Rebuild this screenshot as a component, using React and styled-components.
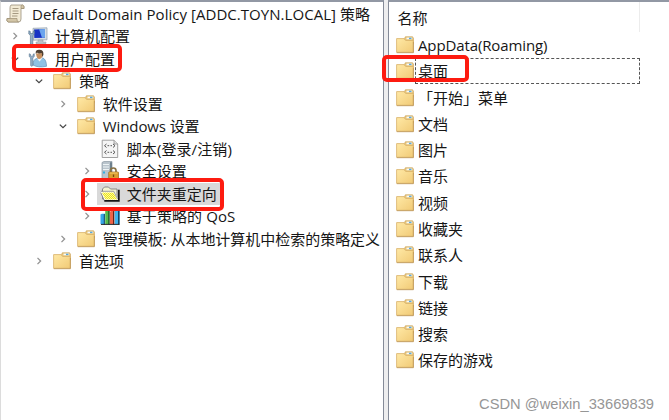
import React from "react";
import styled, { createGlobalStyle } from "styled-components";

const GlobalStyle = createGlobalStyle`
    * { box-sizing: border-box; }
    body {
        margin: 0;
        background: #fff;
        overflow: hidden;
    }
`;

const Console = styled.div`
    position: relative;
    display: flex;
    width: 669px;
    height: 420px;
    overflow: hidden;
    background: #eeeeef;
    color: #161616;
    font: 15px/22px "Open Sans", "Noto Sans CJK SC", sans-serif;
    white-space: nowrap;
`;

const TreePane = styled.div`
    width: 384px;
    padding-top: .7px;
    background: #fff;
    border-top: 2px solid #9298a4;
    border-left: 1px solid #dcdcdc;
    border-right: 1px solid #858b98;
    overflow: hidden;
`;

const ListPane = styled.div`
    flex: 1;
    margin-left: 4px;
    background: #fff;
    border-top: 2px solid #9298a4;
    border-left: 1px solid #858b98;
`;

const TreeRow = styled.div`
    display: flex;
    align-items: center;
    height: 22.48px;
    padding-left: ${props => props.$depth ? 5 + (props.$depth - 1) * 23.9 : 4}px;
`;

const Toggle = styled.span`
    display: flex;
    justify-content: center;
    width: 18px;
    margin-right: 4px;
    flex: none;
`;

const IconSlot = styled.span`
    display: flex;
    justify-content: center;
    width: 20px;
    flex: none;
`;

const ItemBody = styled.div`
    display: flex;
    align-items: center;
    height: 22px;
    padding: 0 5px 0 3px;
    margin-left: -3px;
    background: ${props => props.$selected ? "#d9d9d9" : "transparent"};
`;

const Label = styled.span`
    margin-left: 7px;
    letter-spacing: ${props => props.$spacing || 0}px;
`;

const Header = styled.div`
    width: 251px;
    height: 30px;
    padding: 5px 0 0 8.5px;
    border-right: 1px solid #ececec;
`;

const ListRow = styled.div`
    display: flex;
    align-items: center;
    height: 26.27px;
    padding-left: 6px;
`;

const ListLabel = styled.span`
    display: flex;
    align-items: center;
    width: ${props => props.$focused ? "225px" : "auto"};
    height: 26px;
    padding-left: 2px;
    border: 1px dashed ${props => props.$focused ? "#555" : "transparent"};
    letter-spacing: ${props => props.$spacing || 0}px;
`;

const Marker = styled.div`
    position: absolute;
    z-index: 2;
    left: ${props => props.$x}px;
    top: ${props => props.$y}px;
    width: ${props => props.$w}px;
    height: ${props => props.$h}px;
    border: 4px solid #fd1b10;
    border-radius: 5px;
`;

const Watermark = styled.div`
    position: absolute;
    right: 15px;
    bottom: 5px;
    color: #969696;
    font: 14.7px/22px "Liberation Sans", sans-serif;
`;

const FolderIcon = () => (
    <svg width="18" height="18" viewBox="0 0 18 18">
        <defs>
            <linearGradient id="folder" x1="0" y1="0" x2="1" y2="1">
                <stop offset="0" stopColor="#ffe9a6" />
                <stop offset="1" stopColor="#f1ca76" />
            </linearGradient>
        </defs>
        <path d="M8 4L9.3 .8H16.6L17.4 2.2V8H8Z" fill="#e9c77b" stroke="#cba45c" strokeWidth=".7" />
        <rect x="10.5" y="1.6" width="5.7" height="1.7" fill="#f8fafa" />
        <rect x="13" y="1.7" width="2.5" height="1.4" fill="#5ba9dc" />
        <path d="M.6 2.6H8L9.6 4.4H17.3V16.3H.6Z" fill="url(#folder)" stroke="#d8b067" strokeWidth=".8" />
        <path d="M.8 16.7H17.4V6" fill="none" stroke="#bd9557" strokeWidth=".8" />
    </svg>
);

const ScrollIcon = () => (
    <svg width="19" height="19" viewBox="0 0 19 19">
        <path d="M5 1H16.5Q18.3 1.2 18 4.5H15V15Q15 18 12.5 18H2Q.4 17.5 1 14.5H4V4Q4 2 5 1Z" fill="#f2ead4" stroke="#9b917c" strokeWidth=".8" />
        <path d="M15 4.5V2.5Q15.2 1 16.5 1Q18.6 1.4 18 4.5ZM1 14.5H11Q10.5 17.8 12.7 18H2Q.4 17.5 1 14.5Z" fill="#d3c6a8" stroke="#9b8c70" strokeWidth=".7" />
        <path d="M6.5 4.5H12.5M6.5 7H12.5M6.5 9.5H12.5M6 12H11.5" stroke="#a69a82" strokeWidth="1" />
    </svg>
);

const Wrench = () => (
    <path d="M.8.8V4L2.4 5.5V14Q3.5 15.5 4.8 14V5.5L6.4 4V.8L5 1.5V3.5H2.3V1.5Z" fill="#92afc8" stroke="#536f89" strokeWidth=".6" />
);

const ComputerIcon = () => (
    <svg width="20" height="18" viewBox="0 0 20 18">
        <path d="M5 1.3L19 .8V12.8L5.3 13.2Z" fill="#d7dfe5" stroke="#8c9ba9" strokeWidth=".7" />
        <path d="M6 2.4L17 2V10.8L6.3 11Z" fill="#1732c4" />
        <path d="M11 2.2L17 2V10.8H14Z" fill="#6ba4ed" />
        <path d="M10 13H15V15H18V16.5H8V15H10Z" fill="#bac3c9" stroke="#8d979f" strokeWidth=".5" />
        <g transform="translate(0 3)"><Wrench /></g>
    </svg>
);

const UserIcon = () => (
    <svg width="20" height="19" viewBox="0 0 20 19">
        <path d="M5 16Q5 10 9 9.5L15 9Q18.5 11 18.5 17.3Q10 19 5 16Z" fill="#8fc2e4" stroke="#6191b7" strokeWidth=".7" />
        <path d="M9 9.5L11.5 12.5L14.5 9Z" fill="#f4f6f5" />
        <path d="M8 4.5Q8.5 10 11.5 10Q15 9 15 4Z" fill="#c78f5e" />
        <path d="M7.8 5Q7 .8 11 .8Q16 .6 15.4 6L14.2 8L13.8 4Q10.5 5 9 3.5Z" fill="#4f4032" />
        <g transform="translate(.5 4) scale(.9)"><Wrench /></g>
    </svg>
);

const ScriptIcon = () => (
    <svg width="18" height="20" viewBox="0 0 18 20">
        <path d="M1.2 1.2H13L16.7 5V18.5H1.2Z" fill="#f5f5f5" stroke="#969696" strokeWidth=".9" />
        <path d="M13 1.2V5H16.7" fill="#ddd" stroke="#969696" strokeWidth=".8" />
        <path d="M5.5 5L3.5 6.7L5.5 8.5M6.5 6.7H8.2M9.5 6.7H11M12 5L14 6.7L12 8.5M5.5 11.5L3.5 13.3L5.5 15M6.5 13.3H8.2M9.5 13.3H11M12 11.5L14 13.3L12 15" fill="none" stroke="#555" strokeWidth="1" />
    </svg>
);

const SecurityIcon = () => (
    <svg width="20" height="20" viewBox="0 0 20 20">
        <path d="M2 1.5L4 .5H12V17L10 18H2Z" fill="#b9c4cc" stroke="#8a98a2" strokeWidth=".7" />
        <path d="M3 3.5H9M3 6H9M3 8.5H9" stroke="#edf3f5" strokeWidth="1.2" />
        <path d="M11 1.2V16.5" stroke="#677a87" strokeWidth="1.8" />
        <rect x="3" y="10.5" width="2" height="2" fill="#32aee3" />
        <path d="M10.5 12V9.5Q10.5 7 13.3 7Q16 7 16 9.5V12" fill="none" stroke="#877145" strokeWidth="1.7" />
        <rect x="8.7" y="11" width="9.8" height="7.2" rx=".6" fill="#dc9e30" stroke="#98661b" strokeWidth=".7" />
        <path d="M9.5 12H17.5" stroke="#f6cf6a" />
        <path d="M13.5 13.5V16" stroke="#70480f" strokeWidth="1.3" />
    </svg>
);

const OpenFolderIcon = () => (
    <svg width="20" height="18" viewBox="0 0 20 18">
        <defs>
            <pattern id="checker" width="2" height="2" patternUnits="userSpaceOnUse">
                <rect width="2" height="2" fill="#ffff91" />
                <path d="M0 0H1V1H0ZM1 1H2V2H1Z" fill="#e8df25" />
            </pattern>
        </defs>
        <path d="M2.5 14V4L4.5 2H8.5L10.5 4H17V15Z" fill="#f4f4d2" stroke="#888" strokeWidth="1" />
        <path d="M1 7H14L18 15H5Z" fill="url(#checker)" stroke="#fff" strokeWidth="1.2" />
        <path d="M.7 7.5L4.3 15.5" fill="none" stroke="#888" strokeWidth="1" />
        <path d="M4.3 15.8H18.8V4.8" fill="none" stroke="#161616" strokeWidth="1.8" />
        <path d="M.7 6.3H13.8L17.5 14" fill="none" stroke="#888" strokeWidth=".8" />
    </svg>
);

const QosIcon = () => (
    <svg width="21" height="19" viewBox="0 0 21 19">
        <path d="M.5 7.5L2 6.5H5V17.5H.5Z" fill="#36a6e8" />
        <path d="M4 7.2L5 6.5V18H4Z" fill="#123b5e" />
        <path d="M5.5 2.5L7 1H10V17.5H5.5Z" fill="#55bc4e" />
        <path d="M8.8 2L10 1V18H8.8Z" fill="#173d20" />
        <path d="M10.5 4.5L12 3.3H15V17.5H10.5Z" fill="#ef6348" />
        <path d="M13.8 4.2L15 3.3V18H13.8Z" fill="#501912" />
        <path d="M15.5 4L17 3H20.5V17.5H15.5Z" fill="#3fb4ef" />
        <path d="M19 3.8L20.5 3V18H19Z" fill="#123c59" />
        <path d="M1 17.8H20.5" stroke="#151b20" strokeWidth="1" />
    </svg>
);

const Chevron = ({ open }) => (
    <svg width="8" height="8" viewBox="0 0 8 8">
        <path
            d={open ? "M.8 2.6L4 5.6L7.2 2.6" : "M2.5 .9L5.6 4L2.5 7.1"}
            fill="none"
            stroke={open ? "#444" : "#929292"}
            strokeWidth="1.3"
        />
    </svg>
);

const tree = [
    { depth: 0, icon: ScrollIcon, text: "Default Domain Policy [ADDC.TOYN.LOCAL] 策略", spacing: 0.04 },
    { depth: 1, icon: ComputerIcon, text: "计算机配置" },
    { depth: 1, icon: UserIcon, text: "用户配置", open: true },
    { depth: 2, icon: FolderIcon, text: "策略", open: true },
    { depth: 3, icon: FolderIcon, text: "软件设置" },
    { depth: 3, icon: FolderIcon, text: "Windows 设置", open: true, spacing: -0.1 },
    { depth: 4, icon: ScriptIcon, text: "脚本(登录/注销)", leaf: true, spacing: 0.1 },
    { depth: 4, icon: SecurityIcon, text: "安全设置" },
    { depth: 4, icon: OpenFolderIcon, text: "文件夹重定向", selected: true },
    { depth: 4, icon: QosIcon, text: "基于策略的 QoS", spacing: 0.1 },
    { depth: 3, icon: FolderIcon, text: "管理模板: 从本地计算机中检索的策略定义", spacing: -0.03 },
    { depth: 2, icon: FolderIcon, text: "首选项" },
];

const folders = [
    "AppData(Roaming)", "桌面", "「开始」菜单", "文档", "图片", "音乐", "视频",
    "收藏夹", "联系人", "下载", "链接", "搜索", "保存的游戏",
];

const TreeItem = ({ item }) => {
    const Icon = item.icon;
    return (
        <TreeRow $depth={item.depth}>
            {item.depth > 0 && <Toggle>{!item.leaf && <Chevron open={item.open} />}</Toggle>}
            <ItemBody $selected={item.selected}>
                <IconSlot><Icon /></IconSlot>
                <Label $spacing={item.spacing}>{item.text}</Label>
            </ItemBody>
        </TreeRow>
    );
};

const App = () => (
    <>
        <GlobalStyle />
        <Console>
            <TreePane>
                {tree.map(item => <TreeItem key={item.text} item={item} />)}
            </TreePane>
            <ListPane>
                <Header>名称</Header>
                {folders.map((name, i) => (
                    <ListRow key={name}>
                        <IconSlot><FolderIcon /></IconSlot>
                        <ListLabel $focused={i === 1} $spacing={i === 0 ? -0.12 : 0}>{name}</ListLabel>
                    </ListRow>
                ))}
            </ListPane>
            <Marker $x={12} $y={44} $w={110} $h={28} />
            <Marker $x={81} $y={178} $w={143} $h={33} />
            <Marker $x={382} $y={55} $w={87} $h={27} />
            <Watermark>CSDN @weixin_33669839</Watermark>
        </Console>
    </>
);

export default App;
